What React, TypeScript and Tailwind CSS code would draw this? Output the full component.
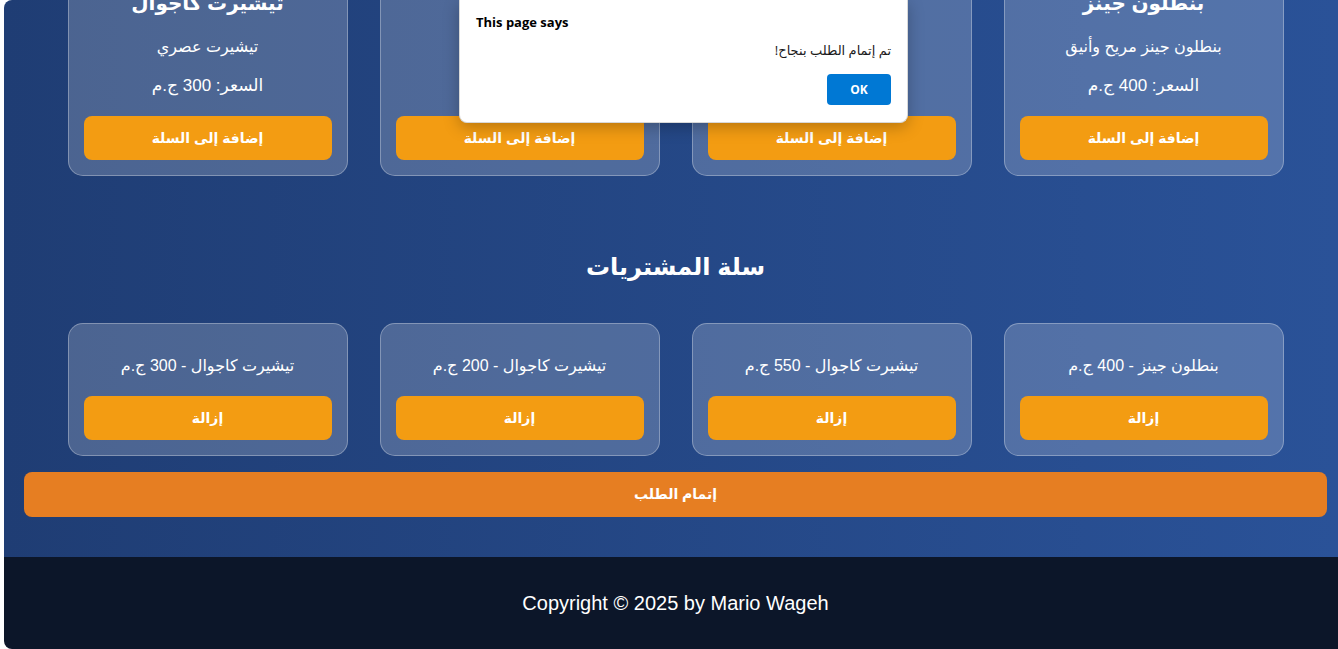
import React from 'react';

type Product = { name: string; desc: string; price: number };

const products: Product[] = [
  { name: 'بنطلون جينز', desc: 'بنطلون جينز مريح وأنيق', price: 400 },
  { name: 'تيشيرت', desc: 'تيشيرت قطن', price: 550 },
  { name: 'تيشيرت', desc: 'تيشيرت بسيط', price: 200 },
  { name: 'تيشيرت كاجوال', desc: 'تيشيرت عصري', price: 300 },
];

const cart = [
  { name: 'بنطلون جينز', price: 400 },
  { name: 'تيشيرت كاجوال', price: 550 },
  { name: 'تيشيرت كاجوال', price: 200 },
  { name: 'تيشيرت كاجوال', price: 300 },
];

const font = "font-['Liberation_Sans','DejaVu_Sans',sans-serif]";

const ProductCard: React.FC<{ p: Product }> = ({ p }) => (
  <div className="w-[280px] rounded-[15px] border border-white/30 bg-white/20 px-[15px] pt-[20px] pb-[15px] text-center text-white">
    <h3 className="text-[20px] leading-[24px] font-bold">{p.name}</h3>
    <p className="mt-[20px] text-[16px] leading-[24px]">{p.desc}</p>
    <p className="mt-[15px] text-[17px] leading-[24px]">السعر: {p.price} ج.م</p>
    <button className="mt-[18px] h-[44px] w-full rounded-[8px] bg-[#f39c12] text-[14px] font-bold text-white">
      إضافة إلى السلة
    </button>
  </div>
);

const CartCard: React.FC<{ name: string; price: number }> = ({ name, price }) => (
  <div className="w-[280px] rounded-[15px] border border-white/30 bg-white/20 px-[15px] pt-[30px] pb-[15px] text-center text-white">
    <p className="text-[16px] leading-[24px]">
      {name} - {price} ج.م
    </p>
    <button className="mt-[18px] h-[44px] w-full rounded-[8px] bg-[#f39c12] text-[14px] font-bold text-white">
      إزالة
    </button>
  </div>
);

export default function App() {
  return (
    <div className={`relative h-[649px] overflow-hidden bg-white pl-[4px] ${font}`}>
      <div dir="rtl" className="flex h-full flex-col overflow-hidden rounded-l-[8px]">
        {/* Main */}
        <main className="overflow-hidden bg-gradient-to-r from-[#1f3d74] to-[#2a5298] pl-[20px] pr-[11px] pb-[40px]">
          <div className="-mt-[30px] flex justify-center gap-[32px]">
            {products.map((p, i) => (
              <ProductCard key={i} p={p} />
            ))}
          </div>

          <h2 className="mt-[75px] text-center text-[24px] leading-[32px] font-bold text-white">سلة المشتريات</h2>

          <div className="mt-[40px] flex justify-center gap-[32px]">
            {cart.map((c, i) => (
              <CartCard key={i} name={c.name} price={c.price} />
            ))}
          </div>

          <button className="mt-[16px] h-[45px] w-full rounded-[8px] bg-[#e67e22] text-[14px] font-bold text-white">
            إتمام الطلب
          </button>
        </main>

        {/* Footer */}
        <footer dir="ltr" className="flex-1 bg-[#0c1629] pl-[20px] pr-[11px] py-[30px] text-center text-[20px] leading-[32px] text-white">
          Copyright © 2025 by Mario Wageh
        </footer>
      </div>

      {/* Browser alert */}
      <div className="absolute left-[459px] top-0 h-[123px] w-[449px] rounded-b-[8px] border border-t-0 border-[#d8d8d8] bg-white px-[16px] pt-[13px] font-['Open_Sans','DejaVu_Sans',sans-serif] shadow-[0_4px_16px_rgba(0,0,0,0.25)]">
        <div className="text-[13px] leading-[18px] font-bold text-black">This page says</div>
        <div dir="rtl" className="mt-[10px] text-[13px] leading-[18px] text-[#1a1a1a]">تم إتمام الطلب بنجاح!</div>
        <div className="mt-[15px] flex justify-end">
          <button className="h-[31px] w-[64px] rounded-[4px] bg-[#0078d4] text-[12px] font-bold text-white">OK</button>
        </div>
      </div>
    </div>
  );
}
